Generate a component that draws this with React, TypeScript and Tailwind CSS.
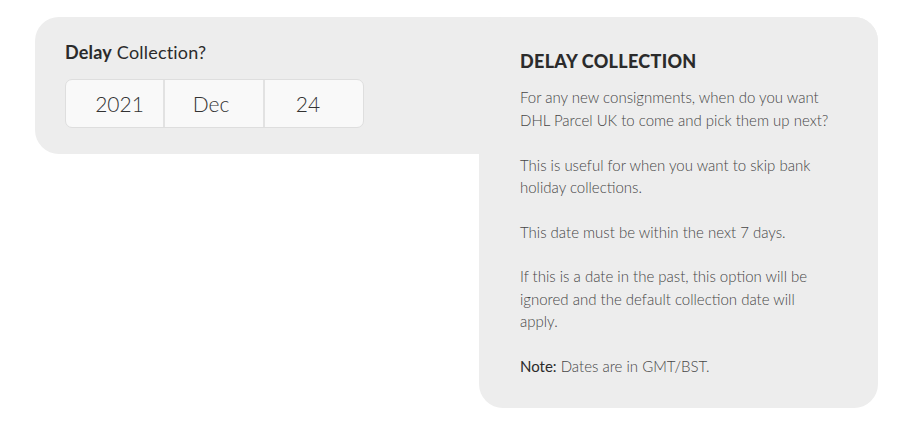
import React from "react";

export default function App() {
  const font = { fontFamily: "Lato, 'Open Sans', sans-serif" };
  return (
    <div className="min-h-[431px] w-[911px] bg-white pl-[35px] pt-[17px]" style={font}>
      <div className="relative w-[843px]">
        <div className="h-[137px] rounded-[24px] bg-[#ededed] pl-[30px] pt-[22px]">
          <div className="text-[18px] leading-[26px] tracking-[0.2px] text-[#2b2b2b]">
            <span className="font-bold">Delay</span> <span className="font-normal">Collection?</span>
          </div>
          <div className="mt-[14px] flex h-[49px] w-[299px] overflow-hidden rounded-[7px] border border-[#dedede] bg-[#f9f9f9]">
            <div className="flex w-[99px] items-center justify-center border-r-2 border-[#e2e2e2] pl-[10px] text-[21px] font-light text-[#333]">2021</div>
            <div className="flex w-[100px] items-center justify-center border-r-2 border-[#e2e2e2] pr-[6px] text-[21px] font-light text-[#333]">Dec</div>
            <div className="flex flex-1 items-center justify-center pr-[12px] text-[21px] font-light text-[#333]">24</div>
          </div>
        </div>
        <div className="absolute right-0 top-0 h-[391px] w-[399px] rounded-[24px] bg-[#ededed] pl-[41px] pr-[30px] pt-[33px]">
          <h2 className="text-[18px] font-black uppercase leading-[22px] tracking-[0.3px] text-[#2b2b2b]">Delay Collection</h2>
          <div className="mt-[14px] text-[15px] font-light leading-[22.5px] text-[#464646]">
            <p>For any new consignments, when do you want<br />DHL Parcel UK to come and pick them up next?</p>
            <p className="mt-[22.5px]">This is useful for when you want to skip bank<br />holiday collections.</p>
            <p className="mt-[22px]">This date must be within the next 7 days.</p>
            <p className="mt-[22px]">If this is a date in the past, this option will be<br />ignored and the default collection date will<br />apply.</p>
            <p className="mt-[22px]"><span className="font-normal text-[#2b2b2b]">Note:</span> Dates are in GMT/BST.</p>
          </div>
        </div>
      </div>
    </div>
  );
}
